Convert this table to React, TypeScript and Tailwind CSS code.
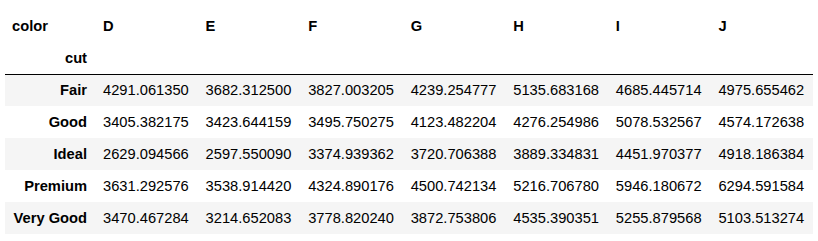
const columns = ['D', 'E', 'F', 'G', 'H', 'I', 'J']

const rows: [string, string[]][] = [
  ['Fair', ['4291.061350', '3682.312500', '3827.003205', '4239.254777', '5135.683168', '4685.445714', '4975.655462']],
  ['Good', ['3405.382175', '3423.644159', '3495.750275', '4123.482204', '4276.254986', '5078.532567', '4574.172638']],
  ['Ideal', ['2629.094566', '2597.550090', '3374.939362', '3720.706388', '3889.334831', '4451.970377', '4918.186384']],
  ['Premium', ['3631.292576', '3538.914420', '4324.890176', '4500.742134', '5216.706780', '5946.180672', '6294.591584']],
  ['Very Good', ['3470.467284', '3214.652083', '3778.820240', '3872.753806', '4535.390351', '5255.879568', '5103.513274']],
]

export default function App() {
  return (
    <div className="w-[818px] h-[241px] bg-white pt-[10px] pl-[5px] font-['Liberation_Sans',Arial,sans-serif] text-[14.7px] text-black">
      <table className="border-collapse table-fixed w-[808px]">
        <colgroup>
          <col className="w-[90px]" />
          {columns.map((c) => (
            <col key={c} />
          ))}
        </colgroup>
        <thead>
          <tr className="h-[32px]">
            <th className="text-left font-bold pl-[7px]">color</th>
            {columns.map((c) => (
              <th key={c} className="text-left font-bold pl-[8px]">
                {c}
              </th>
            ))}
          </tr>
          <tr className="h-[32px] border-b border-black">
            <th className="text-right font-bold pr-[8px]">cut</th>
            {columns.map((c) => (
              <th key={c} />
            ))}
          </tr>
        </thead>
        <tbody>
          {rows.map(([name, values], i) => (
            <tr key={name} className={i % 2 === 0 ? 'h-[32px] bg-[#f5f5f5]' : 'h-[32px] bg-white'}>
              <th className="text-right font-bold pr-[8px] whitespace-nowrap">{name}</th>
              {values.map((v, j) => (
                <td key={j} className="text-left pl-[8px] whitespace-nowrap">
                  {v}
                </td>
              ))}
            </tr>
          ))}
        </tbody>
      </table>
    </div>
  )
}
